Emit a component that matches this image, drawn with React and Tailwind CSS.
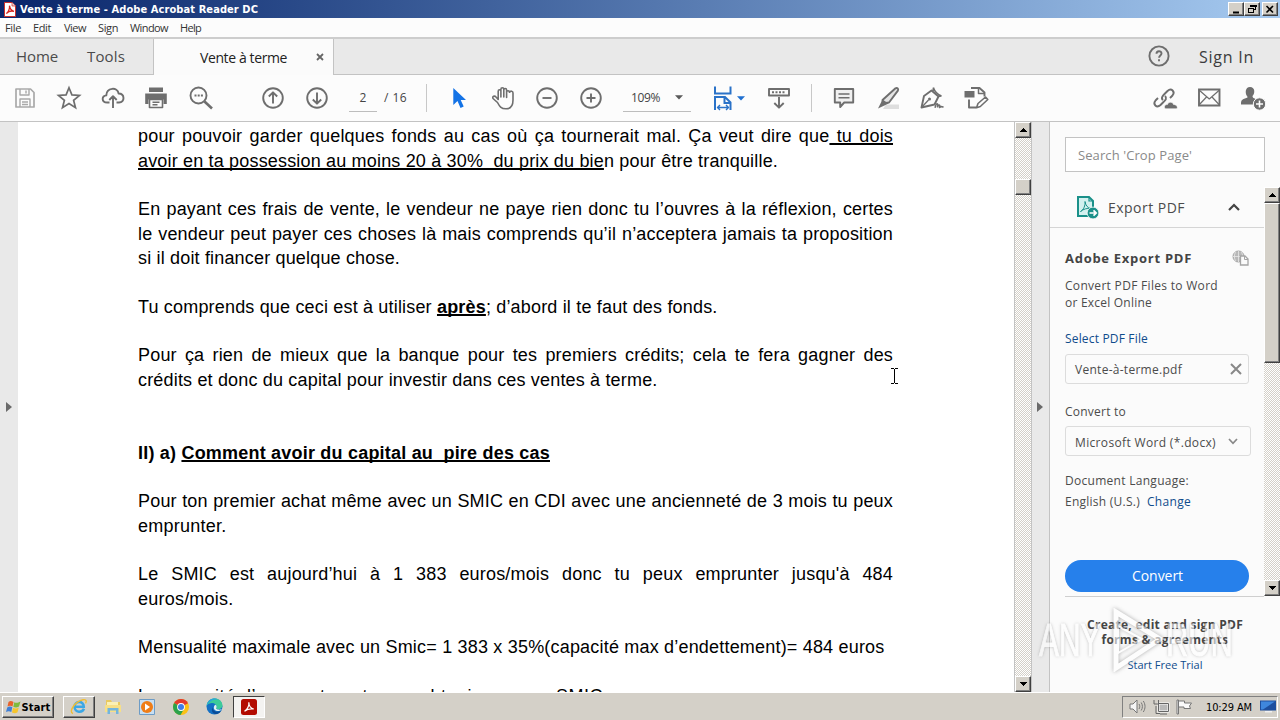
import { useLayoutEffect, useRef, useState } from 'react'

const MENU = [
  { label: 'File', w: 16, box: 'w-[28px]' },
  { label: 'Edit', w: 18, box: 'w-[31px]' },
  { label: 'View', w: 22, box: 'w-[34px]' },
  { label: 'Sign', w: 20, box: 'w-[32px]' },
  { label: 'Window', w: 38, box: 'w-[50px]' },
  { label: 'Help', w: 21, box: 'w-[30px]' },
]

const LINES = [
  { justify: true, body: <>pour pouvoir garder quelques fonds au cas où ça tournerait mal. Ça veut dire que<U> tu dois</U></> },
  { w: 640, body: <><U>avoir en ta possession au moins 20 à 30%&nbsp; du prix du bie</U>n pour être tranquille.</> },
  {},
  { justify: true, body: 'En payant ces frais de vente, le vendeur ne paye rien donc tu l’ouvres à la réflexion, certes' },
  { justify: true, body: 'le vendeur peut payer ces choses là mais comprends qu’il n’acceptera jamais ta proposition' },
  { w: 262, body: 'si il doit financer quelque chose.' },
  {},
  { w: 579.5, body: <>Tu comprends que ceci est à utiliser <b><U>après</U></b>; d’abord il te faut des fonds.</> },
  {},
  { justify: true, body: 'Pour ça rien de mieux que la banque pour tes premiers crédits; cela te fera gagner des' },
  { w: 519.5, body: 'crédits et donc du capital pour investir dans ces ventes à terme.' },
  {},
  {},
  { w: 412, body: <b>II) a) <U>Comment avoir du capital au&nbsp; pire des cas</U></b> },
  {},
  { justify: true, body: 'Pour ton premier achat même avec un SMIC en CDI avec une ancienneté de 3 mois tu peux' },
  { w: 88.5, body: 'emprunter.' },
  {},
  { justify: true, body: 'Le SMIC est aujourd’hui à 1 383 euros/mois donc tu peux emprunter jusqu\'à 484' },
  { w: 95.5, body: 'euros/mois.' },
  {},
  { w: 746.5, body: 'Mensualité maximale avec un Smic= 1 383 x 35%(capacité max d’endettement)= 484 euros' },
  {},
  { w: 465, body: 'La capacité d’emprunt peut nous obtenir avec un SMIC' },
]

// Spreads the letters so that the text takes exactly w pixels
function Fit({ w, className = '', children }) {
  const ref = useRef(null)
  const [spacing, setSpacing] = useState(0)

  useLayoutEffect(() => {
    const el = ref.current
    el.style.letterSpacing = '0px'
    const natural = el.getBoundingClientRect().width
    const value = (w - natural) / el.textContent.length
    el.style.letterSpacing = `${value}px`
    setSpacing(value)
  }, [w])

  return (
    <span ref={ref} className={`inline-block whitespace-pre ${className}`} style={{ letterSpacing: `${spacing}px` }}>
      {children}
    </span>
  )
}

function U({ children }) {
  return (
    <span className="underline decoration-2 underline-offset-1 [text-decoration-skip-ink:none]">{children}</span>
  )
}

function Icon({ size = 28, className = '', children }) {
  return (
    <svg
      width={size}
      height={size}
      viewBox={`0 0 ${size} ${size}`}
      fill="none"
      stroke="#6e6e6e"
      strokeWidth="1.9"
      strokeLinejoin="round"
      className={`shrink-0 ${className}`}
    >
      {children}
    </svg>
  )
}

function Tool({ children }) {
  return (
    <div className="w-11 h-full flex items-center justify-center shrink-0">
      <Icon>{children}</Icon>
    </div>
  )
}

function Divider() {
  return <div className="w-px h-7 bg-[#c8c8c8] shrink-0" />
}

function Caret({ color }) {
  return (
    <svg width="8" height="5" viewBox="0 0 8 5" className="shrink-0">
      <path d="M0 0.3h8L4 4.6z" fill={color} />
    </svg>
  )
}

function Bevel({ className = '', children }) {
  return (
    <div
      className={`bg-[#d4d0c8] border border-t-white border-l-white border-r-[#404040] border-b-[#404040] shadow-[inset_-1px_-1px_0_#808080] flex items-center justify-center shrink-0 ${className}`}
    >
      {children}
    </div>
  )
}

function Arrow({ down }) {
  return (
    <svg width="7" height="4" viewBox="0 0 7 4" shapeRendering="crispEdges">
      <path d={down ? 'M0 0h7L3.5 4z' : 'M0 4h7L3.5 0z'} fill="#000" />
    </svg>
  )
}

function TitleBar() {
  return (
    <div className="h-[18px] flex items-center bg-gradient-to-r from-[#0a246a] to-[#a6caf0] pl-1 pr-0.5 shrink-0">
      <svg width="12" height="15" viewBox="0 0 12 15" className="mr-[4px]">
        <path d="M0.5 0.5h7.5l3.5 3.5v10.5h-11z" fill="#fff" stroke="#c9302c" />
        <path d="M8 0.5V4h3.5" fill="#f6d5d3" stroke="#c9302c" strokeWidth="0.7" />
        <path d="M2.3 11.5C4 10.5 6 7 5.5 3.7C6 7 8 9 10 9.3C7.500 8.600 4.500 9.300 2.300 11.500z" fill="none" stroke="#d5231c" strokeWidth="1.3" />
      </svg>
      <Fit w={238} className="pt-[2px] font-['DejaVu_Sans_Condensed','DejaVu_Sans',sans-serif] font-bold text-[11px] text-white">
        Vente à terme - Adobe Acrobat Reader DC
      </Fit>
      <div className="flex ml-auto">
        <Bevel className="w-4 h-3.5">
          <svg width="10" height="9"><path d="M2 7.500h6" stroke="#000" strokeWidth="2" /></svg>
        </Bevel>
        <Bevel className="w-4 h-3.5">
          <svg width="10" height="10" shapeRendering="crispEdges" fill="none" stroke="#000">
            <path d="M3.500 3V1.500h5v4H7M3 1h6v1H3z" />
            <path d="M1.500 4.500h5v4h-5zM1 4.500h6" />
          </svg>
        </Bevel>
        <Bevel className="w-4 h-3.5 ml-0.5">
          <svg width="10" height="9"><path d="M1.500 1l6.500 6.500M8 1L1.500 7.500" stroke="#000" strokeWidth="1.600" /></svg>
        </Bevel>
      </div>
    </div>
  )
}

function MenuBar() {
  return (
    <div className="h-[21px] flex items-center pl-[5px] pt-[2px] bg-[#fcfcfc] border-b-2 border-[#cdcdcd] text-[11px] text-[#333] shrink-0">
      {MENU.map(item => (
        <div key={item.label} className={item.box}>
          <Fit w={item.w}>{item.label}</Fit>
        </div>
      ))}
    </div>
  )
}

function TabBar() {
  return (
    <div className="h-9 flex bg-[#e9e9e9] text-[#4b4b4b] shrink-0">
      <div className="w-[154px] flex items-center pl-4 border-r border-b border-[#c3c3c3] text-[15px]">
        <Fit w={42} className="mr-[29px]">Home</Fit>
        <Fit w={38}>Tools</Fit>
      </div>
      <div className="w-[179px] flex items-center bg-[#fbfbfb] pl-[46px] text-sm text-[#222]">
        <Fit w={87} className="pt-px">Vente à terme</Fit>
        <svg width="8" height="8" viewBox="0 0 8 8" className="ml-[29px]">
          <path d="M1 1l6 6M7 1L1 7" stroke="#666" strokeWidth="1.800" />
        </svg>
      </div>
      <div className="flex-1 flex items-center justify-end pr-[26px] border-l border-b border-[#c3c3c3]">
        <Icon size={24} className="mr-[28px] -mt-[2px]">
          <circle cx="12" cy="12" r="9.600" />
          <path d="M9.500 9.800c0-3.400 5-3.300 5-0.200c0 1.900-2.400 2-2.400 4.100M12 15.300v2" />
        </Icon>
        <Fit w={55} className="text-base text-[#3c3c3c]">Sign In</Fit>
      </div>
    </div>
  )
}

function Toolbar() {
  return (
    <div className="h-[47px] flex items-center bg-[#fcfcfc] border-b border-[#c3c3c3] pl-[3px] text-xs text-[#444] shrink-0">
      <Tool>
        <g stroke="#a9a9a9" strokeWidth="1.700">
          <path d="M5 5h14.500l3.500 3.500V23H5z" />
          <path d="M9 5v6h9V5M15 6.500v3M9 23v-8h10v8M11 18h6M11 20.500h6" strokeWidth="1.400" />
        </g>
      </Tool>
      <Tool>
        <path d="M14 3.800l2.900 7.100 7.600 0.500-5.900 4.900 1.900 7.400-6.500-4.100-6.500 4.100 1.900-7.400-5.900-4.900 7.600-0.500z" strokeLinejoin="miter" strokeWidth="1.700" />
      </Tool>
      <Tool>
        <path d="M10.500 18.500H8.300C2 18.300 2.600 11.500 7.300 11.400C7.600 3.300 18.500 2.700 19.600 9.500C25.900 9.600 26.200 18.300 20 18.500h-2.500M14 24V12.500M10.300 16l3.700-3.800 3.700 3.800" />
      </Tool>
      <Tool>
        <g transform="translate(-1 0)">
          <path d="M7 3.500h14v4.500H7z" fill="#6e6e6e" stroke="none" />
          <path d="M3.200 9.500h21.600V20H21.500v-4.500h-15V20H3.200z" fill="#6e6e6e" stroke="none" />
          <path d="M7.500 15.500h13v8h-13zM10.500 18.300h7M10.500 20.800h5" strokeWidth="1.600" />
        </g>
      </Tool>
      <Tool>
        <circle cx="11.500" cy="11.500" r="8" />
        <path d="M17.500 17.500l7.500 7" strokeWidth="2.600" />
        <path d="M7.500 11.500h2M10.700 11.500h2M13.900 11.500h2" strokeWidth="2" />
      </Tool>
      <div className="w-[28px] shrink-0" />
      <Tool>
        <circle cx="14" cy="14" r="9.800" />
        <path d="M14 19.500V8.500M9.800 12.500L14 8.300l4.200 4.200" />
      </Tool>
      <Tool>
        <circle cx="14" cy="14" r="9.800" />
        <path d="M14 8.500v11M9.800 15.500l4.200 4.200 4.200-4.200" />
      </Tool>
      <div className="w-7 h-[27px] ml-[10px] flex items-center justify-center border-b border-[#bdbdbd] shrink-0">2</div>
      <Fit w={23} className="ml-[7px]">/ 16</Fit>
      <div className="w-[19px] shrink-0" />
      <Divider />
      <div className="w-[10px] shrink-0" />
      <Tool>
        <path d="M8.300 4v17l4.200-4 3 7 3.200-1.400-3-6.600h5.300z" fill="#1473e6" stroke="none" />
      </Tool>
      <Tool>
        <path d="M9.200 15.500V7.300c0-2 2.700-2 2.700 0V13V5.200c0-2 2.900-2 2.900 0V13V6c0-2 2.800-2 2.800 0v7.500V8.300c0-2 2.700-2 2.900 0c0.800-1.600 3.500-1.600 3.500 0.600V16c0 6-2.500 8.800-7 8.800c-5 0-6.500-2.500-8.500-6.300L4 14.500c-1-2.200 1.600-3.200 3-1.500z" strokeWidth="1.600" />
      </Tool>
      <Tool>
        <circle cx="14" cy="14" r="9.800" />
        <path d="M9.500 14h9" />
      </Tool>
      <Tool>
        <circle cx="14" cy="14" r="9.800" />
        <path d="M9.500 14h9M14 9.500v9" />
      </Tool>
      <div className="w-[68px] h-[27px] ml-[10px] flex items-center pl-[8px] border-b border-[#bdbdbd] shrink-0">
        <Fit w={29} className="mr-[15px]">109%</Fit>
        <Caret color="#5a5a5a" />
      </div>
      <div className="w-[53px] ml-[18px] flex items-center shrink-0">
        <Icon>
          <g stroke="#2a72c8" strokeWidth="2">
            <path d="M6 2.500v7h15.500v-7M6 26V13h10l5.500 5.500V26M15.500 13v6h6" strokeLinejoin="miter" />
            <path d="M9 23.500h10M11 21l-2.500 2.500L11 26M17 21l2.500 2.500L17 26" strokeWidth="1.400" />
          </g>
        </Icon>
        <Caret color="#1f6fd0" />
      </div>
      <div className="-ml-[5px]" />
      <Tool>
        <path d="M4 5h20v6.500H4z" />
        <path d="M7 8.300h14" strokeDasharray="2 1.500" />
        <path d="M14 13v10.500M9.300 19l4.700 4.700 4.700-4.700" />
      </Tool>
      <div className="w-[10px] shrink-0" />
      <Divider />
      <div className="w-[10px] shrink-0" />
      <Tool>
        <path d="M4.800 5h18.400v13.500h-9l-4 4.500v-4.500H4.800z" fill="#f0f0f0" />
        <path d="M8.500 10h11M8.500 13.700h11" strokeWidth="1.500" />
      </Tool>
      <Tool>
        <path d="M12 20.500h13v4.500H9z" fill="#dedede" stroke="none" />
        <path d="M21.500 4.300c1.800-1 3.300 0.500 2.400 2.300L15 18.500l-6 1-0.500-3.500z" fill="#e4e4e4" />
        <path d="M8.500 15.500l6 4-3 1.500-7.500 3.500 2.500-5z" fill="#6e6e6e" stroke="none" />
      </Tool>
      <Tool>
        <path d="M3.500 23.500l2.500-11.500L13.500 6.500l7 6-4 8z" strokeWidth="1.900" />
        <path d="M3.500 23.500l7-7.500" strokeWidth="1.300" />
        <circle cx="11.500" cy="15" r="1.500" fill="#6e6e6e" stroke="none" />
        <path d="M15 7l0.500-3.500M20 12.500l3.500-0.500M15.500 4c1 3 4 6.500 8 8" strokeWidth="1.600" />
        <path d="M17 23.800c1.500-6 3.500-4.500 2.500-1c1-2.500 3-2.200 2 0.700c1-1.500 2-1 4-0.300" strokeWidth="1.600" />
      </Tool>
      <Tool>
        <path d="M9 4h8.500l5 4.500v4M7 15.500v8h7" />
        <path d="M16.500 4v5.500h5.500" strokeWidth="1.500" />
        <path d="M2.500 7h10v6.500h-10z" fill="#6e6e6e" stroke="none" />
        <path d="M14.500 23.800l1.500-4.300 7.500-6.500 2.300 2.500-7.500 7z" strokeWidth="1.600" />
      </Tool>
      <div className="flex items-center ml-auto pr-[5px]">
        <Tool>
          <path d="M12.500 15.500c-2.500-2 0-4.500 1.500-6l3-3c4-3.500 8 0.800 5 4.500l-2.500 2.500M14.500 11.500c2.500 2.500 0 4.500-1.500 6l-3 3c-4 3.500-8-0.800-5-4.500l2.500-2.500" transform="translate(-0.500 0.500)" />
          <path d="M14 24.800c-1.800-4 1.500-4.300 2.500-4.300c1-3.500 5.500-2.500 6 0c4 0 4.800 4.300 2.800 4.300z" fill="#6e6e6e" stroke="#fcfcfc" strokeWidth="0.600" />
        </Tool>
        <Tool>
          <path d="M4 5.500h20.500v16H4z" strokeLinejoin="miter" />
          <path d="M4 6l10.300 9L24.500 6M4 21l7.500-8M24.500 21l-7.500-8" strokeWidth="1.200" />
        </Tool>
        <Tool>
          <path d="M11 3c5.500 0 5 7 2.500 9c0 2.500 3 2.500 4 3.500l-3 5H2c0-5 1-5 6.500-7c0-0.500 0-1-0.500-1.500C6 9.500 6 3 11 3z" fill="#6e6e6e" stroke="none" />
          <circle cx="20.500" cy="20" r="6.200" fill="#6e6e6e" stroke="#fcfcfc" strokeWidth="1" />
          <path d="M17 20h7M20.500 16.500v7" stroke="#fff" strokeWidth="1.600" />
        </Tool>
      </div>
    </div>
  )
}

function Scrollbar({ className = '', gap, thumb }) {
  return (
    <div
      className={`flex flex-col shrink-0 bg-[repeating-conic-gradient(#ffffff_0_25%,#d4d0c8_0_50%)] bg-[length:2px_2px] ${className}`}
    >
      <Bevel className="h-4"><Arrow /></Bevel>
      <div className={gap} />
      <Bevel className={thumb} />
      <Bevel className="h-4 mt-auto"><Arrow down /></Bevel>
    </div>
  )
}

function SideHandle({ className = '' }) {
  return (
    <div className={`w-[18px] flex items-center justify-center bg-[#e9e9e9] shrink-0 ${className}`}>
      <svg width="6" height="10" viewBox="0 0 6 10"><path d="M0 0l6 5-6 5z" fill="#6a6a6a" /></svg>
    </div>
  )
}

function Page() {
  return (
    <div className="flex-1 relative overflow-hidden bg-white pt-[2.4px] pl-[120px] font-['Liberation_Sans',Arial,sans-serif] text-[18px] leading-[24.33px] text-black">
      {LINES.map((line, i) => (
        <div
          key={i}
          className={`w-[755px] h-[24.33px] whitespace-nowrap ${line.justify ? 'tracking-[0.18px] [text-align-last:justify]' : ''}`}
        >
          {line.justify ? line.body : line.body && <Fit w={line.w}>{line.body}</Fit>}
        </div>
      ))}
      {/* text cursor */}
      <svg width="8" height="16" viewBox="0 0 8 16" className="absolute left-[872px] top-[246px]" fill="none" stroke="#000" shapeRendering="crispEdges">
        <path d="M0.500 0.500h3M4.500 0.500h3M0.500 15.500h3M4.500 15.500h3M4 1v14" />
      </svg>
    </div>
  )
}

function ExportPanel() {
  return (
    <div className="w-[231px] flex flex-col bg-[#fbfbfb] border-l border-[#c3c3c3] text-xs text-[#4b4b4b] shrink-0">
      <div className="w-[200px] h-[35px] ml-[15px] mt-[15px] flex items-center pl-3 pt-[2px] bg-white border border-[#c3c3c3] text-[#8a8a8a] shrink-0">
        <Fit w={114} className="text-[13px]">Search 'Crop Page'</Fit>
      </div>
      <div className="h-[410px] mt-[15px] flex items-start shrink-0">
        <div className="flex-1 h-full flex flex-col">
          <div className="h-[41px] flex items-center pl-[26px] pr-6 border-b border-[#d5d5d5] shrink-0">
            <svg width="24" height="24" viewBox="0 0 24 24" fill="none" stroke="#1a9089">
              <path d="M2 2h11l4 4v15H2z" fill="#d3f1ef" strokeWidth="2" />
              <path d="M13 2v4h4" strokeWidth="1.200" />
              <path d="M4.500 16.500c3-1.500 5-6 4.500-10c0.500 4 3 6.500 5.500 7c-3.500-0.500-7 0.500-10 3z" strokeWidth="1" />
              <circle cx="17" cy="18" r="5.900" fill="#1a9089" stroke="#fbfbfb" strokeWidth="0.800" />
              <path d="M13.500 18h6.500M17.500 15.300l2.700 2.700-2.700 2.700" stroke="#fff" strokeWidth="1.700" />
            </svg>
            <Fit w={77} className="ml-[8px] pt-[2px] text-sm">Export PDF</Fit>
            <svg width="12" height="8" viewBox="0 0 12 8" className="ml-auto">
              <path d="M1 7l5-5 5 5" fill="none" stroke="#444" strokeWidth="2.200" />
            </svg>
          </div>
          <div className="flex-1 flex flex-col">
            <div className="flex-1 flex flex-col ml-[15px] border-b border-[#cfcfcf]">
              <div className="h-5 mt-[20px] flex items-center pr-[15px]">
                <Fit w={127} className="pt-px text-[13px] font-bold text-[#444]">Adobe Export PDF</Fit>
                <svg width="17" height="16" viewBox="0 0 17 16" className="ml-auto" fill="none" stroke="#a5a5a5">
                  <circle cx="6.500" cy="6.500" r="5.500" fill="#b9b9b9" />
                  <path d="M1 6.500h11M6.500 1v11M3.500 2c-1.500 3-1.500 6 0 9M9.500 2c1.500 3 1.500 6 0 9" stroke="#e9e9e9" strokeWidth="0.800" />
                  <path d="M8.500 6h4.500l3 3v6H8.500z" fill="#fbfbfb" strokeWidth="1.300" />
                  <path d="M12.500 6v3.500h3.500" />
                </svg>
              </div>
              <div className="mt-[9px] leading-[17px]">
                <Fit w={153} className="block">Convert PDF Files to Word</Fit>
                <Fit w={87} className="block">or Excel Online</Fit>
              </div>
              <div className="h-5 mt-[18px] flex items-center text-[#0f4c8c]"><Fit w={83}>Select PDF File</Fit></div>
              <div className="w-[184px] h-[30px] mt-[5px] flex items-center pl-[9px] pr-[6px] border border-[#dcdcdc] rounded-[3px]">
                <Fit w={107} className="pt-[2px]">Vente-à-terme.pdf</Fit>
                <svg width="12" height="12" viewBox="0 0 12 12" className="ml-auto">
                  <path d="M1 1l10 10M11 1L1 11" stroke="#888" strokeWidth="2" />
                </svg>
              </div>
              <div className="h-5 mt-[18px] flex items-center"><Fit w={61}>Convert to</Fit></div>
              <div className="w-[186px] h-[30px] mt-[4px] flex items-center pl-[9px] pr-[12px] border border-[#dcdcdc] rounded-[3px]">
                <Fit w={141} className="pt-[3px]">Microsoft Word (*.docx)</Fit>
                <svg width="10" height="7" viewBox="0 0 10 7" className="ml-auto">
                  <path d="M1 1l4 4.300L9 1" fill="none" stroke="#888" strokeWidth="1.700" />
                </svg>
              </div>
              <div className="h-5 mt-[15px] flex items-center"><Fit w={124}>Document Language:</Fit></div>
              <div className="h-5 mt-px flex items-center">
                <Fit w={75}>English (U.S.)</Fit>
                <Fit w={44} className="ml-[7px] text-[#0f4c8c]">Change</Fit>
              </div>
              <div className="w-[184px] h-8 mt-auto mb-[4px] flex items-center justify-center rounded-full bg-[#2680eb] pl-px text-sm text-white">
                <Fit w={51}>Convert</Fit>
              </div>
            </div>
          </div>
        </div>
        <Scrollbar className="w-4 h-[409px]" gap="h-0" thumb="h-[160px]" />
      </div>
      <div className="relative flex-1">
        <div className="flex flex-col items-center pt-[20px] leading-[15px]">
          <Fit w={156} className="font-bold text-[#444]">Create, edit and sign PDF</Fit>
          <Fit w={127} className="font-bold text-[#444]">forms &amp; agreements</Fit>
          <Fit w={75} className="mt-[10px] text-[11px] text-[#0f4c8c]">Start Free Trial</Fit>
        </div>
        <Watermark />
      </div>
    </div>
  )
}

function Watermark() {
  return (
    <div className="absolute -left-[11px] top-[11px] flex items-center h-[64px] opacity-60 font-['Liberation_Sans',Arial,sans-serif] text-[46px] leading-none text-white [-webkit-text-stroke:1px_white] [text-shadow:0_0_4px_#777]">
      <div className="w-[67px]">
        <span className="inline-block origin-left scale-x-[0.65]">ANY</span>
      </div>
      <svg width="60" height="64" viewBox="0 0 60 64" fill="none" className="shrink-0 drop-shadow-[0_0_2px_#777]">
        <path d="M10 4l44 27-44 29z" stroke="#fff" strokeWidth="5" />
        <path d="M12 18l24 13-24 14z" stroke="#fff" strokeWidth="2" />
      </svg>
      <div className="w-[68px]">
        <span className="inline-block origin-left scale-x-[0.67]">RUN</span>
      </div>
    </div>
  )
}

function Taskbar() {
  return (
    <div className="h-7 flex items-center bg-[#d4d0c8] border-t border-white pl-0.5 pr-0.5 font-['DejaVu_Sans_Condensed','DejaVu_Sans',sans-serif] text-[11px] text-black shrink-0">
      <Bevel className="w-[52px] h-[22px]">
        <svg width="15" height="14" viewBox="0 0 15 14" className="mr-px">
          <path d="M2.500 2C4 0.800 5.500 0.800 7.500 2L6.500 6.500C5 5.500 3.300 5.500 1.500 6.500z" fill="#e8632b" />
          <path d="M8.300 2.300C10 3.200 12 3 14.500 1.500L13 6.500C11 7.800 9 7.600 7.300 6.800z" fill="#7fba3c" />
          <path d="M1.200 7.500C3 6.300 4.800 6.300 6.300 7.300L5.300 12C3.500 11 2 11 0 12z" fill="#3f7fd6" />
          <path d="M7 7.700C9 8.800 11 8.500 12.800 7.500L11.500 12.300C9.500 13.500 8 13.300 6 12.400z" fill="#f6c52c" />
        </svg>
        <Fit w={29} className="pt-[3px] font-bold">Start</Fit>
      </Bevel>
      <Bevel className="w-[32px] h-[22px] ml-[9px]">
        <svg width="18" height="17" viewBox="0 0 18 17" fill="none">
          <path d="M14 10.800c-1.500 4-9 4.200-9.500-1.800c0-6.500 9.300-6.500 9.300-0.300H5" stroke="#3ba7e5" strokeWidth="2.500" />
          <path d="M3 15.500C-2 14 5 3.500 13 1.800c4-0.800 3.500 2 2.500 3.500" stroke="#f0bd33" strokeWidth="1.400" />
        </svg>
      </Bevel>
      <svg width="16" height="17" viewBox="0 0 16 17" className="ml-[10px] shrink-0">
        <path d="M1 2h5l1 2h8v10H1z" fill="#e9c95f" />
        <path d="M2 4h11v8H2z" fill="#fbf0b4" />
        <path d="M0 7h16v7H0z" fill="#f7df87" />
        <path d="M2.500 16v-6h11v6h-2.500v-3.500h-6V16z" fill="#73b5dd" />
      </svg>
      <svg width="16" height="16" viewBox="0 0 16 16" className="ml-[18px] shrink-0">
        <path d="M0.500 0.500h15v15h-15z" fill="#c8dff2" stroke="#6d9cc6" />
        <circle cx="8" cy="8" r="6" fill="#ef7d17" />
        <path d="M6 4.500l5 3.500-5 3.500z" fill="#fff" />
      </svg>
      <svg width="16" height="16" viewBox="0 0 16 16" className="ml-[18px] shrink-0">
        <circle cx="8" cy="8" r="8" fill="#fbc116" />
        <path d="M8 8L1.100 4A8 8 0 0 1 15 4.200z" fill="#e33b2e" />
        <path d="M8 8L1.100 4A8 8 0 0 0 7.500 16L11 10z" fill="#2ba24c" />
        <circle cx="8" cy="8" r="3.900" fill="#fff" />
        <circle cx="8" cy="8" r="3" fill="#3f7de8" />
      </svg>
      <svg width="17" height="17" viewBox="0 0 17 17" className="ml-[17px] shrink-0">
        <circle cx="8.500" cy="8.500" r="8" fill="#1470c4" />
        <path d="M0.600 8C1.500-2 16-2 16.500 7.500C16.500 11 12 12 10 10.500C12 8 9 4.500 5.500 5C3 5.300 1 6.500 0.600 8z" fill="#3ccb9a" />
        <path d="M0.600 8C1.500 1 8-1 12 1.500C6 1 3 4 0.600 8z" fill="#2aa8d8" />
        <path d="M6.500 9c0 4 4 6 8.500 4C12 18 3.500 16.500 6.500 9z" fill="#0c4c96" />
        <path d="M10 10.500c1.500-2 0-3.500-0.500-3.800C7 8 7 12.500 11.500 13c2 0 3.500-0.800 4.500-1.800C14 12 11.500 11.800 10 10.500z" fill="#e4f2f3" />
      </svg>
      <div className="w-[32px] h-[22px] ml-[10px] flex items-center justify-center bg-[#f4f3f1] border border-t-[#404040] border-l-[#404040] border-r-white border-b-white shrink-0">
        <svg width="16" height="16" viewBox="0 0 16 16" fill="none">
          <rect width="16" height="16" rx="2.500" fill="#b30b00" />
          <path d="M3.500 12.300c2.500-1.300 5-5.500 4.300-9c0.200 4 2.500 6.300 5 6.700c-3-0.500-6.500 0-9.300 2.300z" stroke="#fff" strokeWidth="1.200" />
        </svg>
      </div>
      <div className="w-[156px] h-[22px] ml-auto flex items-center pl-[6px] pr-px border border-t-[#808080] border-l-[#808080] border-r-white border-b-white">
        <svg width="17" height="15" viewBox="0 0 17 15" fill="none" stroke="#777">
          <path d="M1 5h3l4-4v13l-4-4H1z" fill="#f5f5f5" />
          <path d="M10 5c1 1.500 1 3.500 0 5M12.200 3.500c1.600 2.500 1.600 5.500 0 8M14.300 2c2.300 3.500 2.300 7.500 0 11" />
        </svg>
        <svg width="17" height="16" viewBox="0 0 17 16" fill="none" stroke="#666" className="ml-[7px]">
          <path d="M5.500 4.500h10v8h-10z" fill="#b9b9b9" stroke="#fff" strokeWidth="2" />
          <path d="M5.500 4.500h10v8h-10zM7 15h7M3 7v7.500h4M1 1v4h4.500V1" />
        </svg>
        <svg width="17" height="16" viewBox="0 0 17 16" fill="#fafafa" stroke="#777" className="ml-[6px]">
          <path d="M1 1h1.500v14H1zM2.500 2h6v2h7l-2 3 1 2.500H8V8H2.500z" />
        </svg>
        <Fit w={46} className="ml-[13px] pt-[3px]">10:29 AM</Fit>
        <svg width="16" height="13" viewBox="0 0 16 13" className="ml-auto">
          <path d="M0 0.500h16v10H0z" fill="#1e4f9e" />
          <path d="M1 1.500h14L3 9.500H1z" fill="#3f87dd" />
          <path d="M5 11h7v1.500H5z" fill="#f0f0f0" />
        </svg>
      </div>
    </div>
  )
}

function App() {
  return (
    <div className="w-[1280px] h-[720px] flex flex-col overflow-hidden bg-[#fbfbfb] font-['Open_Sans','Noto_Sans',sans-serif]">
      <TitleBar />
      <MenuBar />
      <TabBar />
      <Toolbar />
      <div className="h-[570px] flex shrink-0">
        <SideHandle />
        <Page />
        <Scrollbar className="w-[17px] border-l border-[#c3c3c3]" gap="h-[41px]" thumb="h-4" />
        <SideHandle className="border-l border-[#c3c3c3] pr-[2px]" />
        <ExportPanel />
      </div>
      <Taskbar />
    </div>
  )
}

export default App
